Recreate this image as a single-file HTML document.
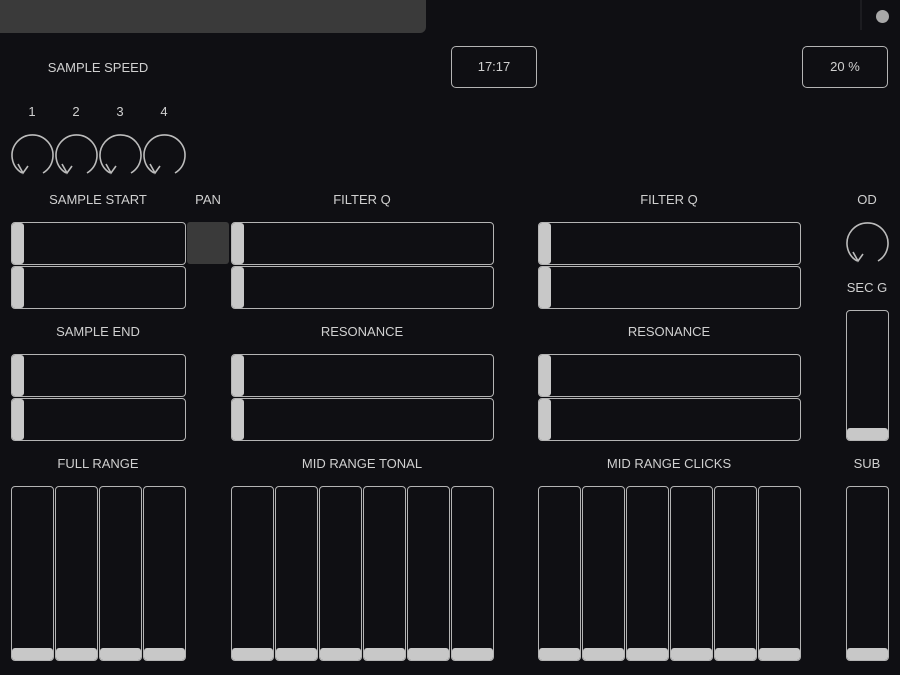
<!DOCTYPE html>
<html><head><meta charset="utf-8"><style>
body{margin:0;width:900px;height:675px;background:#0f0f13;overflow:hidden;position:relative;font-family:"Liberation Sans",sans-serif;color:#d0d0d0;font-size:13px}
div{position:absolute;box-sizing:border-box}
.l{text-align:center;line-height:14px}
.h{border:1.5px solid #b4b4b4;border-radius:4px;height:43px}
.h::before{content:"";position:absolute;left:0;top:0;bottom:0;width:12px;background:#c8c8c8;border-radius:3px}
.v{border:1.5px solid #b4b4b4;border-radius:4px;width:43px}
.v::after{content:"";position:absolute;left:0;right:0;bottom:0;height:12px;background:#c8c8c8;border-radius:3px}
.b{border:1.5px solid #b4b4b4;border-radius:5px;text-align:center;line-height:39px;font-size:13px}
</style></head><body>
<div style="left:0;top:0;width:426px;height:33px;background:#3a3a3a;border-radius:0 0 6px 0"></div>
<div style="left:860px;top:0;width:2px;height:30px;background:#1c1c20"></div>
<div style="left:876px;top:10px;width:13px;height:13px;border-radius:50%;background:#a8a8a8"></div>

<div class="l" style="left:11px;top:61px;width:174px">SAMPLE SPEED</div>
<div class="b" style="left:451px;top:46px;width:86px;height:42px">17:17</div>
<div class="b" style="left:802px;top:46px;width:86px;height:42px">20 %</div>
<div class="l" style="left:11px;top:105px;width:42px">1</div>
<div class="l" style="left:55px;top:105px;width:42px">2</div>
<div class="l" style="left:99px;top:105px;width:42px">3</div>
<div class="l" style="left:143px;top:105px;width:42px">4</div>

<svg style="position:absolute;left:0;top:0" width="900" height="675" fill="none" stroke="#bcbcbc" stroke-width="1.6">
<g id="k"><path d="M22 173 A20.5 20.5 0 1 1 43 173"/><path d="M18 164 L23 173 L28 166"/></g>
<use href="#k" x="44"/><use href="#k" x="88"/><use href="#k" x="132"/>
<use href="#k" x="835" y="88"/>
</svg>

<div class="l" style="left:11px;top:193px;width:174px">SAMPLE START</div>
<div class="l" style="left:187px;top:193px;width:42px">PAN</div>
<div class="l" style="left:231px;top:193px;width:262px">FILTER Q</div>
<div class="l" style="left:538px;top:193px;width:262px">FILTER Q</div>
<div class="l" style="left:846px;top:193px;width:42px">OD</div>
<div class="l" style="left:840px;top:281px;width:54px">SEC G</div>
<div class="l" style="left:11px;top:325px;width:174px">SAMPLE END</div>
<div class="l" style="left:231px;top:325px;width:262px">RESONANCE</div>
<div class="l" style="left:538px;top:325px;width:262px">RESONANCE</div>
<div class="l" style="left:11px;top:457px;width:174px">FULL RANGE</div>
<div class="l" style="left:231px;top:457px;width:262px">MID RANGE TONAL</div>
<div class="l" style="left:538px;top:457px;width:262px">MID RANGE CLICKS</div>
<div class="l" style="left:846px;top:457px;width:42px">SUB</div>

<div style="left:187px;top:222px;width:42px;height:42px;background:#3a3a3a;border-radius:3px"></div>

<div class="h" style="left:11px;top:222px;width:175px"></div>
<div class="h" style="left:11px;top:266px;width:175px"></div>
<div class="h" style="left:11px;top:354px;width:175px"></div>
<div class="h" style="left:11px;top:398px;width:175px"></div>
<div class="h" style="left:231px;top:222px;width:263px"></div>
<div class="h" style="left:231px;top:266px;width:263px"></div>
<div class="h" style="left:231px;top:354px;width:263px"></div>
<div class="h" style="left:231px;top:398px;width:263px"></div>
<div class="h" style="left:538px;top:222px;width:263px"></div>
<div class="h" style="left:538px;top:266px;width:263px"></div>
<div class="h" style="left:538px;top:354px;width:263px"></div>
<div class="h" style="left:538px;top:398px;width:263px"></div>

<div class="v" style="left:846px;top:310px;height:131px"></div>

<div class="v" style="left:11px;top:486px;height:175px"></div>
<div class="v" style="left:55px;top:486px;height:175px"></div>
<div class="v" style="left:99px;top:486px;height:175px"></div>
<div class="v" style="left:143px;top:486px;height:175px"></div>
<div class="v" style="left:231px;top:486px;height:175px"></div>
<div class="v" style="left:275px;top:486px;height:175px"></div>
<div class="v" style="left:319px;top:486px;height:175px"></div>
<div class="v" style="left:363px;top:486px;height:175px"></div>
<div class="v" style="left:407px;top:486px;height:175px"></div>
<div class="v" style="left:451px;top:486px;height:175px"></div>
<div class="v" style="left:538px;top:486px;height:175px"></div>
<div class="v" style="left:582px;top:486px;height:175px"></div>
<div class="v" style="left:626px;top:486px;height:175px"></div>
<div class="v" style="left:670px;top:486px;height:175px"></div>
<div class="v" style="left:714px;top:486px;height:175px"></div>
<div class="v" style="left:758px;top:486px;height:175px"></div>
<div class="v" style="left:846px;top:486px;height:175px"></div>
</body></html>
